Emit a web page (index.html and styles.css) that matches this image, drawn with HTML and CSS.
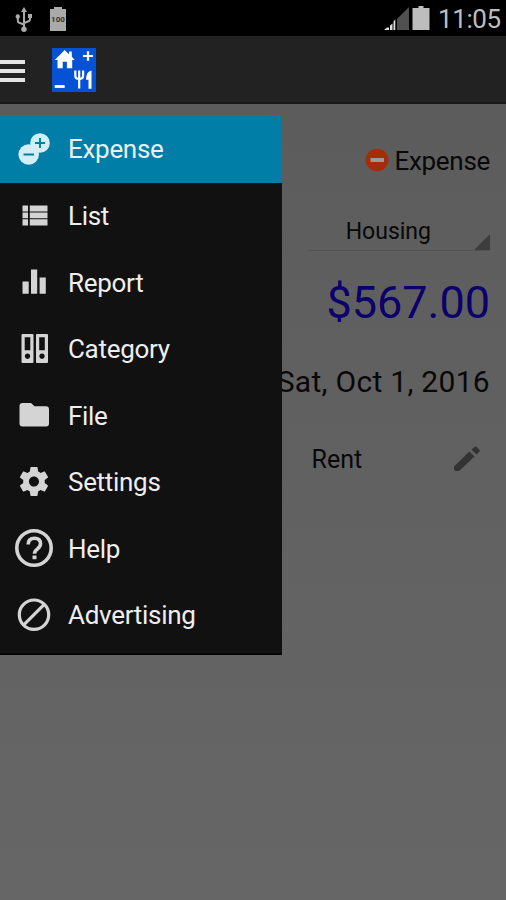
FILE: index.html
```html
<!DOCTYPE html>
<html lang="en">
<head>
  <meta charset="utf-8">
  <title>Expense</title>
  <link rel="stylesheet" href="styles.css">
</head>
<body>

<div class="status">
  <svg class="usb" width="18" height="26" viewBox="0 0 18 26">
    <path d="M9 4v18M2.800 10v3.500q0 2 2 2.500L9 17.500M15 9v3q0 2-2 2.500L9 16" fill="none" stroke="#aaa" stroke-width="2"/>
    <path d="M9 0l3 5H6z" fill="#aaa"/>
    <circle cx="2.800" cy="9.500" r="2.200" fill="#aaa"/>
    <path d="M13 7h4v4h-4z" fill="#aaa"/>
    <circle cx="9" cy="22.300" r="2.700" fill="#aaa"/>
  </svg>
  <div class="full"><span>100</span></div>
  <svg class="signal" width="26" height="24" viewBox="0 0 26 24">
    <path d="M13 12L25 0v23H13z" fill="#505050"/>
    <path d="M0 23l3-2.500h2V23zM6 18.500l2.500-2V23H6zM9.500 14.500l1.800-2.200V23H9.500z" fill="#ddd"/>
  </svg>
  <svg class="battery" width="18" height="24" viewBox="0 0 18 24">
    <path d="M6.500 0h5v2H17.500v22H.5V2h6z" fill="#bdbdbd"/>
  </svg>
  <span class="time">11:05</span>
</div>

<div class="bar">
  <div class="burger"><i></i><i></i><i></i></div>
  <svg class="logo" width="44" height="44" viewBox="0 0 44 44">
    <path d="M0 0h44v44H0z" fill="#0552d5"/>
    <path d="M12.700 2L2.700 12H5.500v8.200h5.200v-6.400h4.200v6.400h5.300V12h2.600L19.800 8.800V3.600h-2.800v2.600z" fill="#fff"/>
    <path d="M31 8h10M36 3.200v9.600" stroke="#fff" stroke-width="2.200"/>
    <path d="M2.700 38.500h10" stroke="#fff" stroke-width="2.800"/>
    <path d="M23.300 22.500v5q0 3.500 3.900 3.500t3.900-3.500v-5M27.200 22.500v18" fill="none" stroke="#fff" stroke-width="2.200"/>
    <path d="M39.500 22.500v18.200h-3v-9H34q0-8.200 5.500-9.200z" fill="#fff"/>
  </svg>
</div>

<div class="page">
  <div class="menu">
    <div class="item active">
      <svg width="38" height="38" viewBox="0 0 38 38">
        <circle cx="25" cy="13" r="9.800" fill="#d5edf5"/>
        <path d="M20 13h10M25 8v10" stroke="#007ea8" stroke-width="1.900"/>
        <circle cx="13.700" cy="24.500" r="10.300" fill="#d5edf5"/>
        <path d="M8.500 24.500h10.500" stroke="#007ea8" stroke-width="2"/>
      </svg>
      <span>Expense</span>
    </div>
    <div class="item">
      <svg width="38" height="38" viewBox="0 0 38 38">
        <path d="M7.500 8.500H13v6H7.500zM14.800 8.500H32.500v6H14.800zM7.500 15.500H13v5.800H7.500zM14.800 15.500H32.500v5.800H14.800zM7.500 22.300H13v6.200H7.500zM14.800 22.300H32.500v6.200H14.800z" fill="#d4d4d4"/>
      </svg>
      <span>List</span>
    </div>
    <div class="item">
      <svg width="38" height="38" viewBox="0 0 38 38">
        <path d="M7.500 18.500h6.200v12.200H7.500zM16 6.600h6.200v24.100H16zM24.600 14.500h6.200v16.200h-6.200z" fill="#d4d4d4"/>
      </svg>
      <span>Report</span>
    </div>
    <div class="item">
      <svg width="38" height="38" viewBox="0 0 38 38">
        <path fill-rule="evenodd" d="M7.500 4h10q1 0 1 1v27q0 1-1 1h-10q-1 0-1-1V5q0-1 1-1zM9.700 7.200v13h5.600v-13zM12.500 23.500a2.700 2.700 0 1 0 .01 0zM22 4h10q1 0 1 1v27q0 1-1 1H22q-1 0-1-1V5q0-1 1-1zM24.200 7.200v13h5.600v-13zM27 23.500a2.700 2.700 0 1 0 .01 0z" fill="#d4d4d4"/>
      </svg>
      <span>Category</span>
    </div>
    <div class="item">
      <svg width="38" height="38" viewBox="0 0 38 38">
        <path d="M7.500 7H16l3.500 3.300h11.500q3 0 3 3v14.200q0 3-3 3H7.500q-3 0-3-3V10q0-3 3-3z" fill="#d4d4d4"/>
      </svg>
      <span>File</span>
    </div>
    <div class="item">
      <svg width="38" height="38" viewBox="0 0 38 38">
        <path transform="translate(1.700 1.200) scale(1.440)" d="M19.430 12.980c.04-.32.07-.64.07-.98s-.03-.66-.07-.98l2.110-1.650c.19-.15.24-.42.12-.64l-2-3.460c-.12-.22-.39-.3-.61-.22l-2.490 1c-.52-.4-1.080-.73-1.690-.98l-.38-2.650C14.460 2.180 14.250 2 14 2h-4c-.25 0-.46.18-.49.42l-.38 2.650c-.61.25-1.170.59-1.690.98l-2.490-1c-.23-.09-.49 0-.61.22l-2 3.460c-.13.22-.07.49.12.64l2.110 1.650c-.04.32-.07.65-.07.98s.03.66.07.98l-2.110 1.650c-.19.15-.24.42-.12.64l2 3.460c.12.22.39.3.61.22l2.490-1c.52.4 1.080.73 1.690.98l.38 2.650c.03.24.24.42.49.42h4c.25 0 .46-.18.49-.42l.38-2.650c.61-.25 1.170-.59 1.690-.98l2.490 1c.23.09.49 0 .61-.22l2-3.460c.12-.22.07-.49-.12-.64l-2.110-1.650zM12 15.500c-1.930 0-3.500-1.570-3.500-3.500s1.570-3.500 3.500-3.500 3.500 1.570 3.500 3.500-1.570 3.500-3.500 3.500z" fill="#d4d4d4"/>
      </svg>
      <span>Settings</span>
    </div>
    <div class="item">
      <svg width="38" height="38" viewBox="0 0 38 38">
        <circle cx="19" cy="19" r="17.200" fill="none" stroke="#d4d4d4" stroke-width="3.600"/>
        <path d="M13.200 15.500q0-6.300 6.300-6.300 6 0 6 5.500 0 2.600-3 5.200-3 2.400-3 4.800" fill="none" stroke="#d4d4d4" stroke-width="3.600"/>
        <path d="M17.500 26.500h4v3.700h-4z" fill="#d4d4d4"/>
      </svg>
      <span>Help</span>
    </div>
    <div class="item">
      <svg width="38" height="38" viewBox="0 0 38 38">
        <circle cx="19" cy="18.700" r="14.700" fill="none" stroke="#d4d4d4" stroke-width="3.200"/>
        <path d="M9 28.700L29 8.700" stroke="#d4d4d4" stroke-width="3.200"/>
      </svg>
      <span>Advertising</span>
    </div>
  </div>

  <div class="form">
    <div class="type">
      <svg width="24" height="24" viewBox="0 0 24 24">
        <circle cx="12" cy="12" r="11.300" fill="#a62c07"/>
        <path d="M5.500 12h13.500" stroke="#999" stroke-width="4"/>
      </svg>
      <span>Expense</span>
    </div>
    <div class="spinner">
      <span>Housing</span>
      <svg width="16" height="16" viewBox="0 0 16 16"><path d="M16 0v16H0z" fill="#3d3d3d"/></svg>
    </div>
    <div class="amount">$567.00</div>
    <div class="date">Sat, Oct 1, 2016</div>
    <div class="note">
      <span>Rent</span>
      <svg width="26" height="26" viewBox="0 0 26 26">
        <path d="M0 20.500L15.500 5.500l5 5L5 25H2q-2 0-2-2zM17.500 3.800L20.700.7q.8-.7 1.600 0L25.500 4q.7.700 0 1.500L22.500 8.500z" fill="#333"/>
      </svg>
    </div>
  </div>
</div>

</body>
</html>
```

FILE: styles.css
```css
body {
  margin: 0;
  height: 900px;
  overflow: hidden;
  background: #000;
  font-family: Roboto, "Noto Sans", sans-serif;
}

svg {
  display: block;
  flex: none;
}

.status {
  display: flex;
  height: 36px;
  box-sizing: border-box;
  padding: 6px 6px 0 15px;
  color: #bdbdbd;
}

.usb {
  margin-top: 1px;
}

.full {
  position: relative;
  width: 16px;
  height: 22px;
  margin: 3px auto 0 17px;
  background: #aaa;
  box-sizing: border-box;
  color: #333;
  font-size: 8px;
  font-weight: bold;
  line-height: 21px;
  text-align: center;
}

/* battery cap */
.full::before {
  content: "";
  position: absolute;
  top: -2px;
  left: 4px;
  width: 8px;
  height: 2px;
  background: #aaa;
}

.signal {
  margin-top: 1px;
}

.battery {
  margin-left: 2px;
}

.time {
  width: 62px;
  margin-left: 8px;
  font-size: 26px;
  letter-spacing: -0.4px;
  line-height: 27px;
  text-align: right;
}

.bar {
  display: flex;
  align-items: center;
  height: 68px;
  box-sizing: border-box;
  background: #222;
  border-bottom: 2px solid #181818;
}

.burger {
  display: flex;
  flex-direction: column;
  gap: 5px;
  width: 25px;
  margin-right: 27px;
  padding-top: 3px;
}

.burger i {
  height: 4px;
  background: #e4e4e4;
}

.logo {
  margin-top: 2px;
}

.page {
  display: flex;
  height: 796px;
  align-items: flex-start;
  background: linear-gradient(#5c5c5c, #606060 35%, #666);
}

.menu {
  position: relative;
  z-index: 1;
  width: 281.500px;
  height: 540px;
  margin-top: 10.500px;
  flex: none;
  background: #111;
  box-shadow: inset 0 -2px #050505;
}

.item {
  display: flex;
  align-items: center;
  gap: 15px;
  height: 66.500px;
  padding-left: 15px;
  color: #eee;
  font-size: 26px;
  letter-spacing: -0.3px;
}

.item span {
  padding-top: 1px;
}

.active {
  height: 68px;
  background: #007ea8;
}

.form {
  display: flex;
  flex-direction: column;
  flex: 1;
  padding: 39px 16px 0 26px;
  color: #080808;
}

.type {
  display: flex;
  align-items: center;
  justify-content: flex-end;
  gap: 5px;
  height: 34px;
  font-size: 26px;
  letter-spacing: -0.3px;
}

.type span {
  padding-top: 1px;
}

.spinner {
  display: flex;
  height: 44px;
  margin-top: 29px;
  justify-content: flex-end;
  align-items: flex-end;
  border-bottom: 1px solid #535353;
  font-size: 23px;
}

.spinner span {
  margin-right: 43px;
  line-height: 36px;
}

.amount {
  margin-top: 25px;
  color: #0b006b;
  font-size: 45px;
  line-height: 54px;
  text-align: right;
}

.date {
  margin: 34px 0 0 -40px;
  font-size: 30px;
  letter-spacing: 0.3px;
  line-height: 36px;
  text-align: right;
  white-space: nowrap;
}

.note {
  display: flex;
  justify-content: space-between;
  align-items: center;
  height: 34px;
  margin-top: 42px;
  padding: 0 10px 0 4px;
  font-size: 25px;
}
```
